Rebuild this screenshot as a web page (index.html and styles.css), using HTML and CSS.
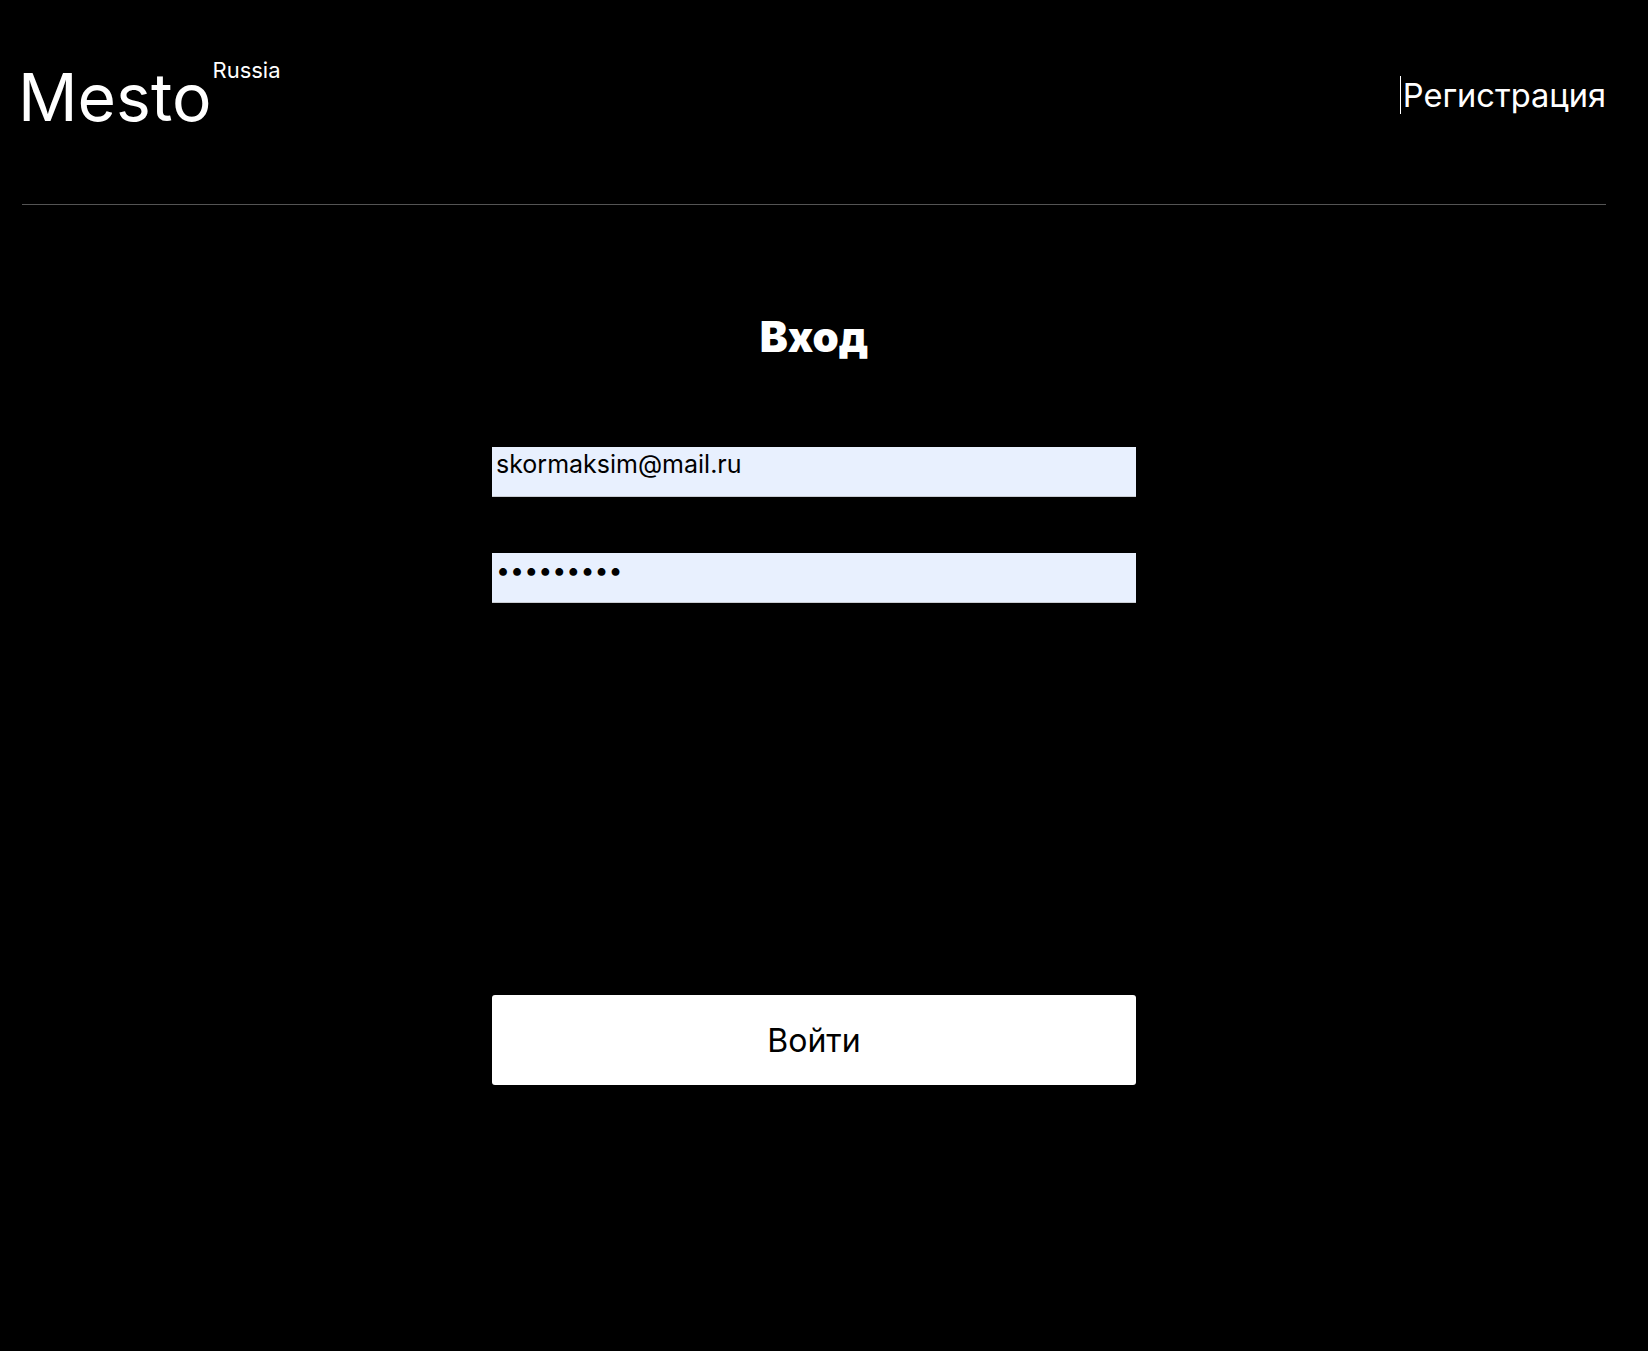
FILE: index.html
```html
<!DOCTYPE html>
<html lang="ru">
<head>
<meta charset="utf-8">
<title>Mesto</title>
<link rel="stylesheet" href="styles.css">
</head>
<body>
<div class="page">
  <header class="header">
    <div class="logo">
      <span class="logo-main">Mesto</span>
      <span class="logo-sub">Russia</span>
    </div>
    <nav class="nav">
      <span class="caret"></span>
      <a class="nav-link" href="#">Регистрация</a>
    </nav>
  </header>
  <main class="auth">
    <h1 class="auth-title">Вход</h1>
    <form class="auth-form">
      <input class="auth-input" type="email" value="skormaksim@mail.ru">
      <input class="auth-input auth-input-second" type="password" value="123456789">
      <button class="auth-button" type="button">Войти</button>
    </form>
  </main>
</div>
</body>
</html>
```

FILE: styles.css
```css
html, body {
  margin: 0;
  padding: 0;
  background: #000;
}

body {
  font-family: Inter, "Noto Sans", "Liberation Sans", sans-serif;
  color: #fff;
  min-height: 1351px;
}

.page {
  width: 1584px;
  margin-left: 22px;
}

.header {
  height: 204px;
  border-bottom: 1px solid #545454;
  display: flex;
  justify-content: space-between;
  align-items: flex-start;
}

.logo {
  margin-top: 59px;
  display: flex;
  align-items: flex-start;
}

.logo-main {
  font-size: 66px;
  line-height: 1;
  margin-top: 5px;
  margin-left: -4px;
}

.logo-sub {
  font-size: 22px;
  line-height: 1;
  margin-left: 1px;
}

.nav {
  margin-top: 76px;
  display: flex;
  align-items: flex-start;
}

.caret {
  width: 1px;
  height: 38px;
  background: #fff;
  margin-right: 2px;
}

.nav-link {
  color: #fff;
  text-decoration: none;
  font-size: 32.6px;
  line-height: 1;
  margin-top: 3px;
}

.auth {
  width: 644px;
  margin: 0 auto;
  display: flex;
  flex-direction: column;
  align-items: stretch;
}

.auth-title {
  margin: 111px 0 0;
  font-size: 42px;
  line-height: 1;
  font-weight: 900;
  text-align: center;
}

.auth-form {
  display: flex;
  flex-direction: column;
  margin-top: 89px;
}

.auth-input {
  box-sizing: border-box;
  height: 50px;
  margin: 0;
  padding: 0 4px 15px 4px;
  border: none;
  border-bottom: 1px solid #c9ccd2;
  background: #e8f0fe;
  color: #000;
  font-family: Inter, "Noto Sans", sans-serif;
  font-size: 25px;
  outline: none;
}

.auth-input-second {
  margin-top: 56px;
}

.auth-button {
  margin-top: 392px;
  height: 90px;
  border: none;
  border-radius: 3px;
  background: #fff;
  color: #000;
  font-family: Inter, "Noto Sans", sans-serif;
  font-size: 32px;
  padding: 0;
  cursor: pointer;
}
```
